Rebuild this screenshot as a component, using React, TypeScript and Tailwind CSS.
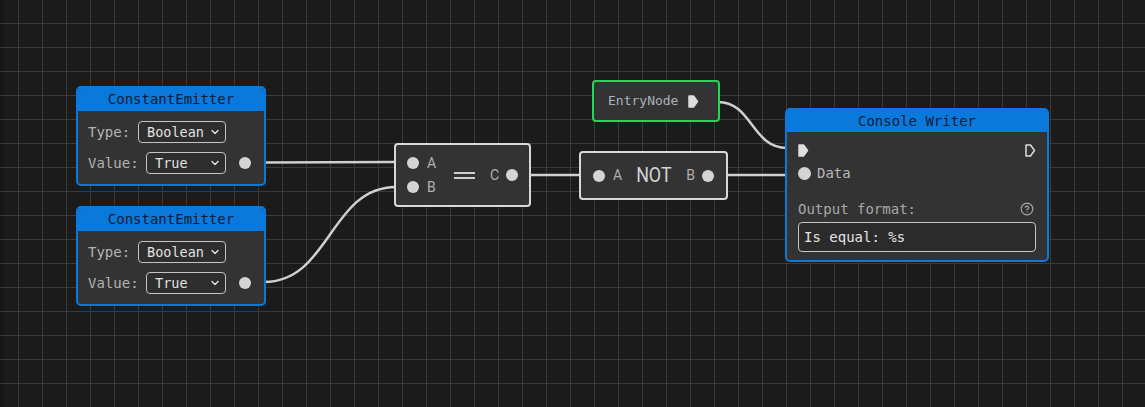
import { ChevronDown } from 'lucide-react';

const mono = "font-['DejaVu_Sans_Mono',monospace]";
const sans = "font-['Roboto',sans-serif]";

function Port() {
  return <div className="w-[12px] h-[12px] rounded-full bg-[#d4d4d4] flex-shrink-0" />;
}

function ExecPin({ filled }: { filled: boolean }) {
  return (
    <svg width="11" height="13" viewBox="0 0 11 13" className="flex-shrink-0">
      <path
        d="M1 1 H5.5 L9.5 6.5 L5.5 12 H1 Z"
        fill={filled ? '#dedede' : 'none'}
        stroke="#dedede"
        strokeWidth="1.5"
        strokeLinejoin="round"
      />
    </svg>
  );
}

function FakeSelect({ value, width }: { value: string; width: string }) {
  return (
    <div
      className={`${width} h-[22px] rounded-[4px] border border-[#c4c4c4] bg-[#2e2e2e] flex items-center justify-between pl-[8px] pr-[4px] text-[#e2e2e2] text-[13.5px]`}
    >
      <span>{value}</span>
      <ChevronDown className="w-[12px] h-[12px]" strokeWidth={2.75} />
    </div>
  );
}

function ConstantEmitter({ top }: { top: string }) {
  return (
    <div className={`absolute left-[76px] ${top} w-[190px] h-[100px] rounded-[5px] border-2 border-[#0b79dc] bg-[#333333] overflow-hidden ${mono} text-[14px]`}>
      <div className="h-[23px] bg-[#0b79dc] text-[#0d1c34] flex items-center justify-center">
        ConstantEmitter
      </div>
      <div className="pl-[10px] pr-[13px] pt-[10px] flex flex-col gap-[9px]">
        <div className="flex items-center h-[22px]">
          <span className="text-[#b4b4b4] w-[50px]">Type:</span>
          <FakeSelect value="Boolean" width="w-[88px]" />
        </div>
        <div className="flex items-center h-[22px]">
          <span className="text-[#b4b4b4] w-[58px]">Value:</span>
          <FakeSelect value="True" width="w-[80px]" />
          <div className="ml-auto">
            <Port />
          </div>
        </div>
      </div>
    </div>
  );
}

export default function App() {
  return (
    <div className="relative w-[1145px] h-[407px] overflow-hidden bg-[#1b1b1b]">
      {/* grid + wires */}
      <svg className="absolute inset-0" width="1145" height="407">
        <defs>
          <pattern id="grid" x="18" y="23" width="24" height="24" patternUnits="userSpaceOnUse">
            <path d="M0.5 0 V24 M0 0.5 H24" stroke="#3a3a3a" strokeWidth="1" fill="none" />
          </pattern>
          <linearGradient id="edge" x1="0" x2="1" y1="0" y2="0">
            <stop offset="0" stopColor="#000" stopOpacity="0.25" />
            <stop offset="1" stopColor="#000" stopOpacity="0" />
          </linearGradient>
        </defs>
        <rect width="1145" height="407" fill="url(#grid)" />
        <rect width="6" height="407" fill="url(#edge)" />
        <g stroke="#cfcfcf" strokeWidth="2.5" fill="none" strokeLinecap="round">
          <path d="M264 162.5 C330 162.5 330 162 396 162" />
          <path d="M264 282 C330 282 330 187 396 187" />
          <path d="M529 175 L581 175" />
          <path d="M726 175 L787 175" />
          <path d="M718 102 C752 102 752 148 787 148" />
        </g>
      </svg>

      <ConstantEmitter top="top-[86px]" />
      <ConstantEmitter top="top-[206px]" />

      {/* Equals node */}
      <div className={`absolute left-[394px] top-[143px] w-[137px] h-[64px] rounded-[4px] border-2 border-[#d8d8d8] bg-[#333333] flex items-center pl-[11px] pr-[11px] ${sans} text-[14px] text-[#b0b0b0]`}>
        <div className="flex flex-col gap-[12px]">
          <div className="flex items-center gap-[8px] h-[12px]">
            <Port />
            <span>A</span>
          </div>
          <div className="flex items-center gap-[8px] h-[12px]">
            <Port />
            <span>B</span>
          </div>
        </div>
        <div className="flex-1 flex flex-col items-center gap-[3px] pl-[2px]">
          <div className="w-[21px] h-[2px] bg-[#cfcfcf]" />
          <div className="w-[21px] h-[2px] bg-[#cfcfcf]" />
        </div>
        <div className="flex items-center gap-[7px]">
          <span>C</span>
          <Port />
        </div>
      </div>

      {/* NOT node */}
      <div className={`absolute left-[579px] top-[151px] w-[149px] h-[49px] rounded-[4px] border-2 border-[#d8d8d8] bg-[#333333] flex items-center pl-[12px] pr-[12px] ${sans} text-[14px] text-[#b0b0b0]`}>
        <div className="flex items-center gap-[8px]">
          <Port />
          <span>A</span>
        </div>
        <div className="flex-1 flex justify-center">
          <span className="text-[21px] text-[#d4d4d4] leading-none scale-x-[0.85]">NOT</span>
        </div>
        <div className="flex items-center gap-[7px]">
          <span>B</span>
          <Port />
        </div>
      </div>

      {/* Entry node */}
      <div className={`absolute left-[592px] top-[80px] w-[128px] h-[42px] rounded-[4px] border-2 border-[#22d65c] bg-[#333333] flex items-center pl-[14px] gap-[10px] ${mono} text-[13px] text-[#a9b3bd]`}>
        <span>EntryNode</span>
        <ExecPin filled />
      </div>

      {/* Console Writer */}
      <div className={`absolute left-[785px] top-[108px] w-[264px] h-[154px] rounded-[5px] border-2 border-[#0b79dc] bg-[#333333] overflow-hidden ${mono} text-[14px]`}>
        <div className="h-[22px] bg-[#0b79dc] text-[#0d1c34] flex items-center justify-center">
          Console Writer
        </div>
        <div className="pl-[11px] pr-[11px] pt-[11px]">
          <div className="flex items-center justify-between h-[14px]">
            <ExecPin filled />
            <ExecPin filled={false} />
          </div>
          <div className="flex items-center gap-[6px] h-[14px] mt-[9px] text-[#b8b8b8]">
            <div className="w-[13px] h-[13px] rounded-full bg-[#d4d4d4]" />
            <span>Data</span>
          </div>
          <div className="flex items-center justify-between mt-[21px] h-[16px] text-[#a8a8a8]">
            <span>Output format:</span>
            <svg width="14" height="14" viewBox="0 0 24 24" fill="none" stroke="#a8a8a8" strokeWidth="2" strokeLinecap="round" strokeLinejoin="round" className="mr-[2px]">
              <circle cx="12" cy="12" r="10" />
              <path d="M9.09 9a3 3 0 0 1 5.83 1c0 2-3 3-3 3" />
              <path d="M12 17h.01" />
            </svg>
          </div>
          <div className="mt-[5px] h-[30px] rounded-[4px] border border-[#c6c6c6] bg-[#2b2b2b] flex items-center pl-[5px] text-[#e4e4e4]">
            Is equal: %s
          </div>
        </div>
      </div>
    </div>
  );
}
